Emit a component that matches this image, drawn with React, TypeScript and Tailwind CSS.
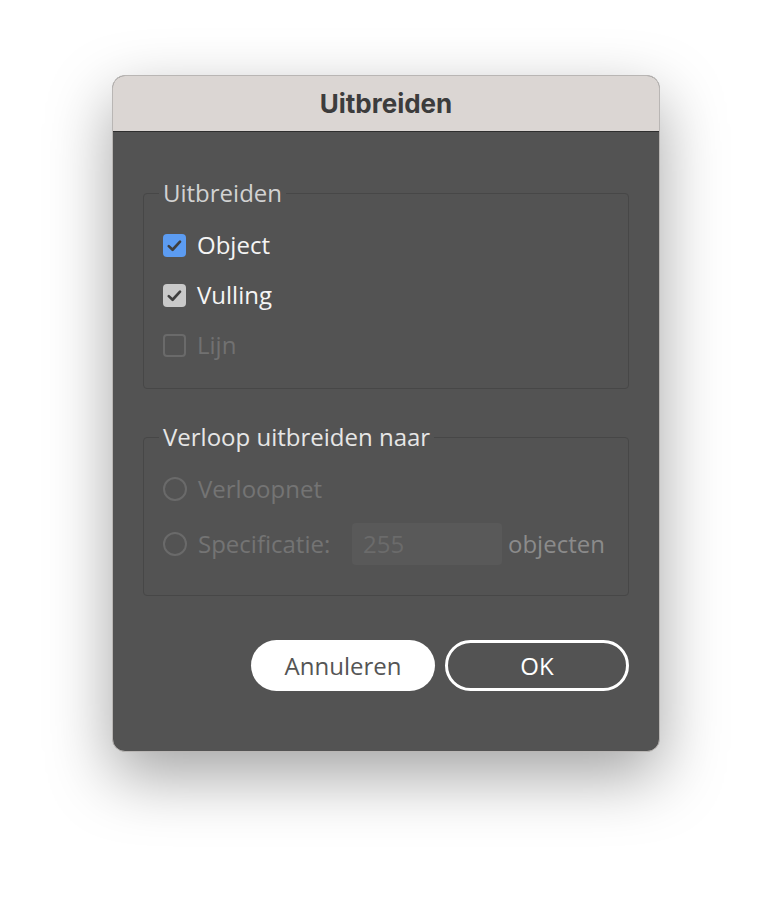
import React from "react";

function Check({ color }: { color: string }) {
  return (
    <span className={`flex h-[23px] w-[23px] items-center justify-center rounded-[4px] ${color}`}>
      <svg width="17" height="17" viewBox="0 0 16 16" fill="none">
        <path d="M2.6 8.6 L6.2 12 L13.2 4.4" stroke="#3f3f3f" strokeWidth="2.5" strokeLinecap="round" strokeLinejoin="round" />
      </svg>
    </span>
  );
}

export default function App() {
  return (
    <div className="min-h-[900px] w-[772px] bg-white pt-[75px]" style={{ fontFamily: '"Open Sans", sans-serif' }}>
      <div className="ml-[112px] flex h-[677px] w-[548px] flex-col overflow-hidden rounded-[13px] border border-[#b9b6b4] bg-[#535353] shadow-[0_24px_64px_rgba(0,0,0,0.36)]">
        <div
          className="flex h-[56px] shrink-0 items-center justify-center border-b border-[#2e2e2e] bg-[#dbd6d3] text-[26px] font-bold text-[#3c3c3c]"
          style={{ fontFamily: 'Inter, sans-serif' }}
        >
          Uitbreiden
        </div>
        <div className="flex flex-col px-[30px] pt-[46px]">
          <fieldset className="rounded-[4px] border border-[#474747] pl-[19px] pr-4 pb-[28px] pt-[22px]">
            <legend className="-ml-[4px] px-[4px] text-[24px] font-medium leading-[30px] text-[#d2d2d2]">Uitbreiden</legend>
            <div className="flex flex-col gap-[20px]">
              <div className="flex h-[30px] items-center gap-[11px]">
                <Check color="bg-[#5c9cf2]" />
                <span className="text-[24px] font-medium text-[#f5f5f5]">Object</span>
              </div>
              <div className="flex h-[30px] items-center gap-[11px]">
                <Check color="bg-[#c9c9c9]" />
                <span className="text-[24px] font-medium text-[#f5f5f5]">Vulling</span>
              </div>
              <div className="flex h-[30px] items-center gap-[11px]">
                <span className="h-[23px] w-[23px] rounded-[4px] border-2 border-[#6a6a6a]" />
                <span className="text-[24px] font-medium text-[#717171]">Lijn</span>
              </div>
            </div>
          </fieldset>
          <fieldset className="mt-[33px] rounded-[4px] border border-[#474747] pl-[19px] pr-4 pb-[30px] pt-[22px]">
            <legend className="-ml-[4px] px-[4px] text-[24px] font-medium leading-[30px] text-[#e6e6e6]">Verloop uitbreiden naar</legend>
            <div className="flex flex-col gap-[19px]">
              <div className="flex h-[30px] items-center gap-[11px]">
                <span className="h-[24px] w-[24px] rounded-full border-2 border-[#6a6a6a]" />
                <span className="text-[24px] font-medium text-[#747474]">Verloopnet</span>
              </div>
              <div className="flex h-[42px] items-center">
                <span className="h-[24px] w-[24px] rounded-full border-2 border-[#6a6a6a]" />
                <span className="ml-[11px] w-[154px] text-[24px] font-medium text-[#747474]">Specificatie:</span>
                <div className="flex h-[42px] w-[150px] items-center rounded-[4px] bg-[#595959] pl-[11px] text-[24px] font-medium text-[#6b6b6b]">
                  255
                </div>
                <span className="ml-[6px] text-[24px] font-medium text-[#8b8b8b]">objecten</span>
              </div>
            </div>
          </fieldset>
          <div className="mt-[44px] flex justify-end gap-[10px]">
            <button className="flex h-[51px] w-[184px] items-center justify-center rounded-full bg-white text-[24px] font-medium text-[#555555]">
              Annuleren
            </button>
            <button className="flex h-[51px] w-[184px] items-center justify-center rounded-full border-[3px] border-white text-[24px] font-medium text-white">
              OK
            </button>
          </div>
        </div>
      </div>
    </div>
  );
}
